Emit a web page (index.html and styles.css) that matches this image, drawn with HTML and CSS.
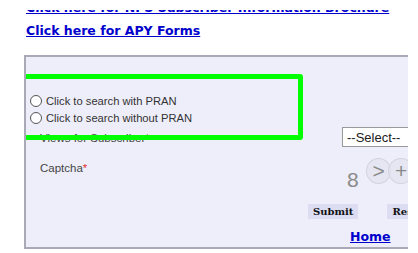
FILE: index.html
```html
<!DOCTYPE html>
<html lang="en">
<head>
  <meta charset="UTF-8">
  <title>Subscriber Search</title>
  <link rel="stylesheet" href="styles.css">
</head>
<body>
  <div class="links">
    <div class="cut">
      <a href="#">Click here for NPS Subscriber Information Brochure</a>
    </div>
    <a href="#" class="apy">Click here for APY Forms</a>
  </div>

  <div class="panel">
    <div class="choices">
      <label class="choice"><span class="radio"></span>Click to search with PRAN</label>
      <label class="choice"><span class="radio"></span>Click to search without PRAN</label>
    </div>
    <div class="row">
      <span class="label">Views for Subscriber<em>*</em></span>
      <span class="select">--Select--</span>
    </div>
    <div class="row captcha-row">
      <span class="label">Captcha<em>*</em></span>
      <span class="captcha">
        <span class="ch">8</span><span class="ch ring">&gt;</span><span class="ch ring">+</span>
      </span>
    </div>
    <div class="actions">
      <button class="btn">Submit</button>
      <button class="btn">Reset</button>
    </div>
    <div class="home"><a href="#">Home</a></div>
    <div class="highlight"></div>
  </div>
</body>
</html>
```

FILE: styles.css
```css
body {
  margin: 0;
  background: #fff;
  font-family: "Liberation Sans", Arial, sans-serif;
  overflow: hidden;
}
a {
  color: #0000cc;
  font-family: "DejaVu Sans", Verdana, sans-serif;
  font-weight: bold;
  font-size: 12.5px;
  line-height: 16px;
  text-decoration: underline;
}
.links {
  padding-left: 26px;
}
.links a {
  display: block;
  white-space: nowrap;
}
.cut {
  height: 5px;
  margin-top: 10px;
  overflow: hidden;
}
.cut a {
  margin-top: -10px;
}
.links .apy {
  margin-top: 8px;
}
.panel {
  position: relative;
  margin: 16px 0 0 24px;
  width: 382px;
  height: 190px;
  background: #eeeefa;
  border-top: 2px solid #a9a9b8;
  border-left: 2px solid #a9a9b8;
  border-bottom: 2px solid #a9a9b8;
  overflow: hidden;
}
.choices {
  padding: 35px 0 0 4px;
}
.choice {
  display: flex;
  align-items: center;
  height: 17px;
  font-size: 11.2px;
  color: #333;
}
.radio {
  width: 10px;
  height: 10px;
  border: 1px solid #555;
  border-radius: 50%;
  background: #fff;
  margin-right: 4px;
}
.row {
  display: flex;
  align-items: flex-start;
  justify-content: space-between;
  padding-left: 14px;
  font-size: 11.5px;
  color: #444;
}
.row em {
  color: #e03030;
  font-style: normal;
}
.label {
  margin-top: 6px;
}
.select {
  box-sizing: border-box;
  width: 80px;
  height: 20px;
  margin-top: 1px;
  margin-right: -14px;
  padding: 2px 4px;
  background: #fff;
  border: 1px solid #999;
  font-size: 13px;
  color: #222;
}
.captcha-row {
  margin-top: 8px;
}
.captcha-row .label {
  margin-top: 7px;
}
.captcha {
  display: flex;
  align-items: flex-start;
  margin: 3px -6px 0 0;
  width: 68px;
  color: #8a8a8a;
  font-size: 21px;
}
.ch {
  width: 14px;
  padding-top: 10px;
  text-align: center;
}
.ring {
  width: 24px;
  height: 24px;
  padding-top: 0;
  line-height: 24px;
  margin-left: 6px;
  border-radius: 50%;
  border: 1px solid #d2d3dc;
  background: rgba(225, 226, 238, 0.7);
}
.ring + .ring {
  margin-left: -3px;
}
.actions {
  display: flex;
  gap: 29px;
  padding-left: 282px;
  margin-top: 12px;
}
.btn {
  padding: 2px 5px;
  background: #dcdcf2;
  border: none;
  font-family: "DejaVu Serif", Georgia, serif;
  font-weight: bold;
  font-size: 10px;
  color: #111;
}
.home {
  padding-left: 324px;
  margin-top: 8px;
}
.highlight {
  position: absolute;
  left: -13px;
  top: 17px;
  width: 280px;
  height: 56px;
  border: 5px solid #00ff00;
  border-radius: 3px;
}
```
